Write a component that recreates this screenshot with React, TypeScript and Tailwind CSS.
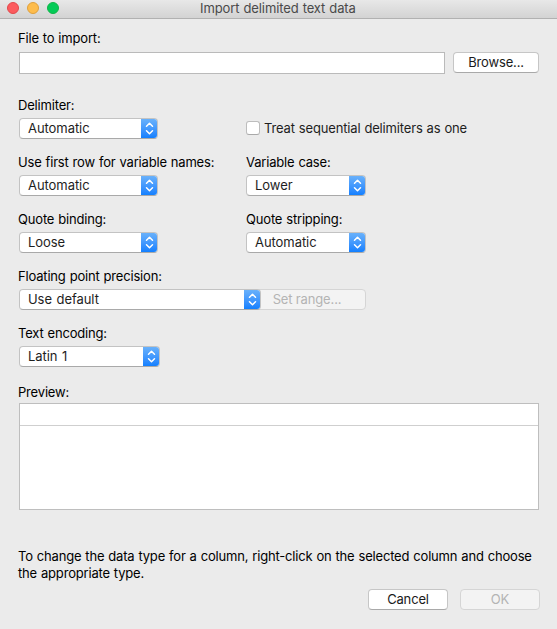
import React from "react";
import clsx from "clsx";

function Label({ children, className }: { children: React.ReactNode; className?: string }) {
  return (
    <div className={clsx("h-4 whitespace-nowrap leading-4 tracking-[-0.18px] [word-spacing:0.5px]", className)}>{children}</div>
  );
}

function Select({ value, className }: { value: string; className: string }) {
  return (
    <button
      type="button"
      className={clsx(
        "flex h-[21px] shrink-0 overflow-hidden rounded-[4px] border border-[#c3c3c3] border-b-[#a9a9a9] bg-white text-left text-[#1e1e1e]",
        className,
      )}
    >
      <span className="flex-1 whitespace-nowrap pl-2 leading-[19px] tracking-[-0.06px] [word-spacing:1px]">{value}</span>
      <span className="-my-px -mr-px flex w-[17px] items-center justify-center bg-linear-to-b from-[#6cb3fa] to-[#067dff]">
        <svg width="9" height="13" viewBox="0 0 9 13" fill="none" stroke="white" strokeWidth="1.5" strokeLinecap="round" strokeLinejoin="round">
          <path d="M1.5 4.2 4.5 1.3l3 2.9M1.5 8.8l3 2.9 3-2.9" />
        </svg>
      </span>
    </button>
  );
}

function Button({ children, disabled, className }: { children: React.ReactNode; disabled?: boolean; className: string }) {
  return (
    <button
      type="button"
      disabled={disabled}
      className={clsx(
        "h-[21px] shrink-0 whitespace-nowrap rounded-[4px] border leading-[19px] tracking-[-0.15px]",
        disabled
          ? "border-[#d5d5d5] bg-[#f3f3f3] text-[#b4b4b4]"
          : "border-[#c6c6c6] border-b-[#a9a9a9] bg-white text-[#1a1a1a]",
        className,
      )}
    >
      {children}
    </button>
  );
}

export default function App() {
  return (
    <div className="h-[629px] w-[557px] overflow-hidden bg-[#ebebeb] font-['Inter','Liberation_Sans',sans-serif] text-[13px] text-black">
      <header className="grid h-[19px] grid-cols-[200px_1fr] border-b border-[#b1b1b1] bg-linear-to-b from-[#e8e8e8] to-[#d3d3d3]">
        <div className="flex gap-2 pl-[7px] pt-[2px]">
          <span className="size-3 rounded-full border border-[#e2484b] bg-[#fc5b5e]" />
          <span className="size-3 rounded-full border border-[#dfa03c] bg-[#fdbc4c]" />
          <span className="size-3 rounded-full border border-[#10b548] bg-[#04cb57]" />
        </div>
        <h1 className="whitespace-nowrap leading-[17px] tracking-[-0.1px] text-[#4a4a4a] [word-spacing:0.5px]">Import delimited text data</h1>
      </header>

      <main className="pl-[19px] pt-[11px]">
        <Label className="-ml-px">File to import:</Label>
        <div className="mt-[6px] flex items-start gap-2">
          <input type="text" className="h-[22px] w-[426px] border border-[#bababa] bg-white px-1 outline-none" />
          <Button className="w-[86px]">Browse...</Button>
        </div>

        <div className="mt-[23px] grid grid-cols-[227px_1fr] gap-y-[15px]">
          <div>
            <Label className="-ml-px">Delimiter:</Label>
            <Select value="Automatic" className="mt-[5px] w-[139px]" />
          </div>
          <div className="flex items-end pb-[4px]">
            <span className="size-[14px] rounded-[3px] border border-[#bdbdbd] border-b-[#a9a9a9] bg-white" />
            <span className="-mb-px ml-[4px] whitespace-nowrap leading-4 tracking-[-0.16px] text-[#1e1e1e] [word-spacing:0.5px]">Treat sequential delimiters as one</span>
          </div>
          <div>
            <Label className="-ml-px">Use first row for variable names:</Label>
            <Select value="Automatic" className="mt-[5px] w-[139px]" />
          </div>
          <div>
            <Label>Variable case:</Label>
            <Select value="Lower" className="mt-[5px] w-[120px]" />
          </div>
          <div>
            <Label className="-ml-px">Quote binding:</Label>
            <Select value="Loose" className="mt-[5px] w-[139px]" />
          </div>
          <div>
            <Label>Quote stripping:</Label>
            <Select value="Automatic" className="mt-[5px] w-[120px]" />
          </div>
          <div className="col-span-2">
            <Label className="-ml-px">Floating point precision:</Label>
            <div className="mt-[5px] flex">
              <Select value="Use default" className="z-10 w-[242px]" />
              <Button disabled className="-ml-[6px] w-[111px] pr-[7px]">Set range...</Button>
            </div>
          </div>
          <div className="col-span-2">
            <Label className="-ml-px">Text encoding:</Label>
            <Select value="Latin 1" className="mt-[5px] w-[141px]" />
          </div>
        </div>

        <Label className="-ml-px mt-[17px]">Preview:</Label>
        <div className="mt-[3px] h-[107px] w-[520px] border border-[#bebebe] bg-white">
          <div className="h-[22px] border-b border-[#cfcfcf]" />
        </div>

        <p className="-ml-px mt-[38px] whitespace-nowrap leading-[17px] tracking-[-0.18px] [word-spacing:0.5px]">
          To change the data type for a column, right-click on the selected column and choose
          <br />
          the appropriate type.
        </p>
        <div className="mt-[7px] flex gap-3 pl-[349px]">
          <Button className="w-20">Cancel</Button>
          <Button disabled className="w-20">OK</Button>
        </div>
      </main>
    </div>
  );
}
